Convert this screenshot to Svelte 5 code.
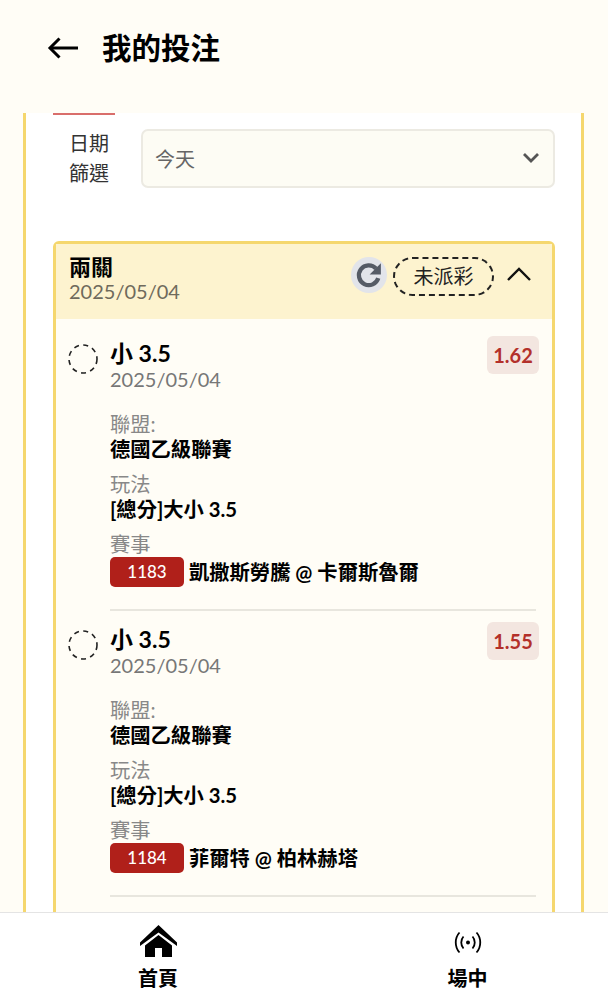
<script>
  const items = [
    { name: '小 3.5', date: '2025/05/04', odds: '1.62', league: '德國乙級聯賽', play: '[總分]大小 3.5', no: '1183', match: '凱撒斯勞騰 @ 卡爾斯魯爾' },
    { name: '小 3.5', date: '2025/05/04', odds: '1.55', league: '德國乙級聯賽', play: '[總分]大小 3.5', no: '1184', match: '菲爾特 @ 柏林赫塔' }
  ];
</script>

<div class="page">
  <header class="topbar">
    <svg class="back" viewBox="0 0 31 22" width="31" height="22" fill="none" stroke="#000" stroke-width="3">
      <path d="M31 11H3" />
      <path d="M12.500 1.500L3 11l9.500 9.500" />
    </svg>
    <h1>我的投注</h1>
  </header>

  <main class="content">
    <section class="panel">
      <div class="tab-line"></div>
      <div class="filter">
        <div class="filter-label">日期<br />篩選</div>
        <div class="select">
          <span>今天</span>
          <svg viewBox="0 0 18 12" width="18" height="12" fill="none" stroke="#555" stroke-width="2.800">
            <path d="M2 2l7 7 7-7" />
          </svg>
        </div>
      </div>

      <article class="bet">
        <div class="bet-head">
          <div class="bet-title">
            <strong>兩關</strong>
            <span>2025/05/04</span>
          </div>
          <div class="refresh">
            <svg viewBox="0 0 24 24" width="30" height="30" fill="none">
              <path d="M19.400 14.500A7.900 7.900 0 1 1 17.600 6.800" stroke="#555b66" stroke-width="3.400" />
              <path d="M21.500 2.500v9h-9z" fill="#555b66" />
            </svg>
          </div>
          <div class="status">未派彩</div>
          <svg class="collapse" viewBox="0 0 26 16" width="26" height="16" fill="none" stroke="#111" stroke-width="2.400">
            <path d="M2 14L13 3l11 11" />
          </svg>
        </div>

        <div class="legs">
          {#each items as item}
            <div class="leg">
              <svg class="radio" viewBox="0 0 30 30" width="30" height="30" fill="none" stroke="#222" stroke-width="1.600" stroke-dasharray="5 4.400">
                <circle cx="15" cy="15" r="14" />
              </svg>
              <div class="leg-body">
                <div class="leg-top">
                  <div class="leg-title">
                    <strong>{item.name}</strong>
                    <span>{item.date}</span>
                  </div>
                  <div class="odds">{item.odds}</div>
                </div>
                <div class="field first">
                  <span>聯盟:</span>
                  <b>{item.league}</b>
                </div>
                <div class="field">
                  <span>玩法</span>
                  <b>{item.play}</b>
                </div>
                <div class="field">
                  <span>賽事</span>
                  <div class="match">
                    <i>{item.no}</i>
                    <b>{item.match}</b>
                  </div>
                </div>
              </div>
            </div>
          {/each}
        </div>
      </article>
    </section>
  </main>

  <nav class="tabbar">
    <div class="tab">
      <svg viewBox="0 0 37 32" width="37" height="32" fill="#000">
        <path d="M18.500 0L37 17.500V21L18.500 7.500 0 21v-3.500z" />
        <path d="M18.500 10L32 20.500V32H22V23h-7v9H5V20.500z" />
      </svg>
      <span>首頁</span>
    </div>
    <div class="tab">
      <svg viewBox="0 0 28 32" width="28" height="32" fill="none" stroke="#000" stroke-width="1.800">
        <path d="M5.500 7.500c-5 5.500-5 14.500 0 20" />
        <path d="M9.500 11.500c-3 3.300-3 8.700 0 12" />
        <path d="M22.500 7.500c5 5.500 5 14.500 0 20" />
        <path d="M18.500 11.500c3 3.300 3 8.700 0 12" />
        <circle cx="14" cy="17.500" r="2" fill="#000" stroke="none" />
      </svg>
      <span>場中</span>
    </div>
  </nav>
</div>

<style>
  :global(body) {
    margin: 0;
    background: #fffdf6;
  }

  .page {
    height: 1000px;
    display: flex;
    flex-direction: column;
    overflow: hidden;
    background: #fffdf6;
    color: #000;
    font-family: Lato, "Noto Sans CJK TC", sans-serif;
  }

  .topbar {
    height: 113px;
    flex: none;
    box-sizing: border-box;
    padding: 0 0 17px 47px;
    display: flex;
    align-items: center;
    gap: 24px;
  }

  .topbar h1 {
    margin: 0;
    font-size: 29.500px;
    font-weight: 700;
    line-height: 1;
  }

  .content {
    flex: 1;
    min-height: 0;
    overflow: hidden;
    padding: 0 24px 0 23px;
  }

  .panel {
    height: 100%;
    box-sizing: border-box;
    padding: 0 26px 0 27px;
    overflow: hidden;
    background: #fff;
    border-left: 3px solid #f5d76e;
    border-right: 3px solid #f5d76e;
  }

  .tab-line {
    width: 62px;
    height: 2px;
    background: #c9302c;
    opacity: 0.700;
  }

  .filter {
    margin-top: 13px;
    padding-left: 15px;
    display: flex;
    align-items: center;
    gap: 31px;
  }

  .filter-label {
    width: 42px;
    flex: none;
    text-align: center;
    font-size: 20px;
    line-height: 30px;
    color: #333;
  }

  .select {
    flex: 1;
    height: 59px;
    box-sizing: border-box;
    padding: 0 13px 0 12px;
    display: flex;
    align-items: center;
    justify-content: space-between;
    background: #fdfcf4;
    border: 2px solid #eceae2;
    border-radius: 7px;
    font-size: 20px;
    color: #666;
  }

  .bet {
    margin-top: 53px;
    min-height: 800px;
    border: 3px solid #f5d76e;
    border-radius: 6px;
    background: #fffdf6;
  }

  .bet-head {
    height: 75px;
    box-sizing: border-box;
    padding: 13px 20px 0 13px;
    display: flex;
    align-items: flex-start;
    background: #fdf3cf;
  }

  .bet-title {
    flex: 1;
    margin-top: -2px;
    display: flex;
    flex-direction: column;
  }

  .bet-title strong {
    font-size: 22px;
    line-height: 24px;
  }

  .bet-title span {
    font-size: 20px;
    line-height: 24px;
    color: #6f6a5c;
  }

  .refresh {
    width: 36px;
    height: 36px;
    display: flex;
    align-items: center;
    justify-content: center;
    border-radius: 50%;
    background: #e2e4ea;
    margin-right: 6px;
  }

  .status {
    width: 101px;
    height: 39px;
    box-sizing: border-box;
    border: 2px dashed #222;
    border-radius: 20px;
    font-size: 20px;
    line-height: 35px;
    text-align: center;
    color: #222;
    margin-right: 12px;
  }

  .collapse {
    margin-top: 9px;
  }

  .legs {
    padding-top: 6px;
  }

  .leg {
    padding: 0 16px 0 12px;
    display: flex;
    gap: 12px;
  }

  .radio {
    flex: none;
    margin-top: 19px;
  }

  .leg-body {
    flex: 1;
    min-width: 0;
    padding: 11px 0 22px;
    border-bottom: 2px solid #e8e6de;
  }

  .leg-top {
    display: flex;
    justify-content: space-between;
    align-items: flex-start;
    margin-right: -3px;
  }

  .leg-title {
    padding-top: 5px;
    display: flex;
    flex-direction: column;
  }

  .leg-title strong {
    font-size: 23px;
    line-height: 25px;
    font-weight: 700;
  }

  .leg-title span {
    font-size: 20px;
    line-height: 26px;
    color: #777;
  }

  .odds {
    width: 52px;
    height: 38px;
    border-radius: 6px;
    background: #f3e6e0;
    color: #b3302a;
    font-size: 20px;
    font-weight: 700;
    line-height: 38px;
    text-align: center;
  }

  .field {
    margin-top: 10px;
    display: flex;
    flex-direction: column;
  }

  .field.first {
    margin-top: 20px;
  }

  .field span {
    font-size: 20.300px;
    line-height: 25px;
    color: #888;
  }

  .field b {
    font-size: 20.300px;
    line-height: 25px;
    font-weight: 700;
  }

  .match {
    display: flex;
    align-items: center;
    gap: 5px;
  }

  .match i {
    width: 74px;
    height: 30px;
    border-radius: 5px;
    background: #b0201a;
    color: #fff;
    font-style: normal;
    font-size: 17px;
    font-weight: 500;
    line-height: 30px;
    text-align: center;
  }

  .tabbar {
    height: 88px;
    flex: none;
    box-sizing: border-box;
    display: grid;
    grid-template-columns: 316px 1fr;
    column-gap: 11px;
    background: #fff;
    border-top: 1px solid #e4e4e4;
  }

  .tab {
    display: flex;
    flex-direction: column;
    align-items: center;
    padding-top: 12px;
  }

  .tab span {
    margin-top: 7px;
    font-size: 20px;
    line-height: 28px;
    font-weight: 700;
  }
</style>
